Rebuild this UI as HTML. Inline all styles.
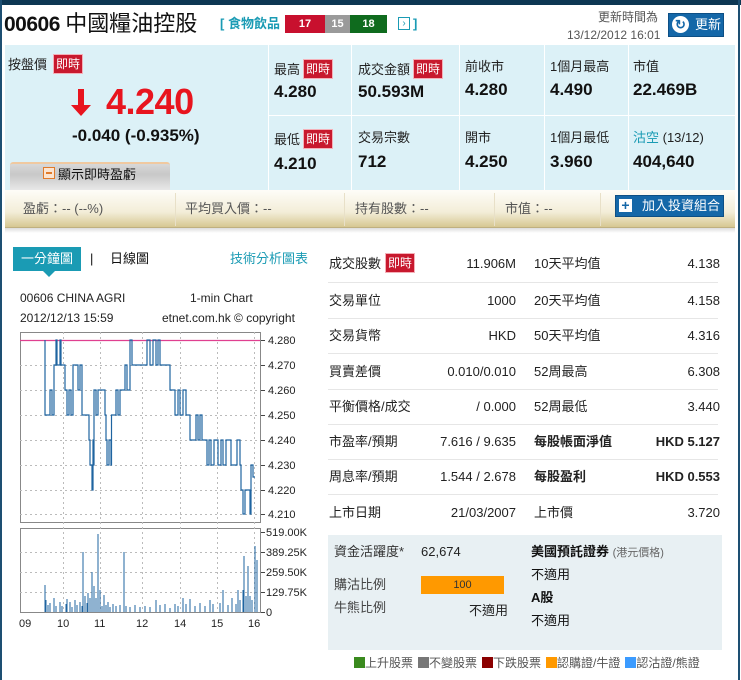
<!DOCTYPE html>
<html><head><meta charset="utf-8">
<style>
*{margin:0;padding:0;box-sizing:border-box}
body{width:741px;height:680px;overflow:hidden;background:#fff;font-family:"Liberation Sans","Noto Sans CJK TC",sans-serif;color:#111;position:relative}
.a{position:absolute;white-space:nowrap;line-height:16px}
.rt{position:absolute;background:#c8192e;color:#fff;font-size:12px;padding:0 2px;line-height:18px;border:1px solid #f4b0b8}
.lab{font-size:13px;color:#222}
.val{font-size:17px;font-weight:bold;color:#111;line-height:20px}
.tl{font-size:13px;color:#222}
.tv{font-size:13px;color:#222;text-align:right}
.sep{position:absolute;height:1px;background:#e6e6e6}
.lg{display:inline-block;width:11px;height:11px;vertical-align:-1px;margin-left:5px}
</style></head><body>
<div class="a" style="left:0;top:0;width:741px;height:5px;background:#0d3753"></div>
<div class="a" style="left:0;top:0;width:2px;height:680px;background:#1d4f72"></div>
<div class="a" style="left:738px;top:0;width:2px;height:680px;background:#1d4f72"></div>

<div class="a" style="left:4px;top:12px;font-size:21px;font-weight:bold;letter-spacing:-0.5px;line-height:24px">00606 <span style="font-weight:normal;font-size:22px;letter-spacing:0">中國糧油控股</span></div>
<div class="a" style="left:220px;top:16px;font-size:13px;color:#1a9bb4;font-weight:bold">[ 食物飲品</div>
<div class="a" style="left:285px;top:15px;width:40px;height:18px;background:#c8102e;color:#fff;font-size:11px;font-weight:bold;text-align:center;line-height:18px">17</div>
<div class="a" style="left:325px;top:15px;width:25px;height:18px;background:#9a9a9a;color:#fff;font-size:11px;font-weight:bold;text-align:center;line-height:18px">15</div>
<div class="a" style="left:350px;top:15px;width:37px;height:18px;background:#0f6b1e;color:#fff;font-size:11px;font-weight:bold;text-align:center;line-height:18px">18</div>
<div class="a" style="left:398px;top:17px;width:12px;height:13px;border:1px solid #1a9bb4;color:#1a9bb4;font-size:10px;line-height:11px;text-align:center">›</div>
<div class="a" style="left:413px;top:16px;font-size:13px;color:#1a9bb4;font-weight:bold">]</div>
<div class="a" style="left:598px;top:9px;font-size:12px;color:#555">更新時間為</div>
<div class="a" style="left:567px;top:27px;font-size:12px;color:#555">13/12/2012 16:01</div>
<div class="a" style="left:668px;top:13px;width:56px;height:24px;background:#1467a8;border:1px solid #0d4f85;color:#fff;font-size:13px;line-height:22px;padding-left:26px">更新</div>
<div class="a" style="left:672px;top:16px;width:17px;height:17px;border-radius:50%;background:#fff;color:#1467a8;font-size:13px;font-weight:bold;line-height:17px;text-align:center">↻</div>

<div class="a" style="left:5px;top:45px;width:730px;height:145px;background:#dcf1f7"></div>
<div class="a" style="left:268px;top:45px;width:1px;height:145px;background:#fff"></div>
<div class="a" style="left:351px;top:45px;width:1px;height:145px;background:#fff"></div>
<div class="a" style="left:459px;top:45px;width:1px;height:145px;background:#fff"></div>
<div class="a" style="left:544px;top:45px;width:1px;height:145px;background:#fff"></div>
<div class="a" style="left:628px;top:45px;width:1px;height:145px;background:#fff"></div>
<div class="a" style="left:268px;top:115px;width:467px;height:1px;background:#fff"></div>

<div class="a lab" style="left:8px;top:57px">按盤價</div>
<div class="rt" style="left:53px;top:54px">即時</div>
<svg class="a" style="left:68px;top:87px" width="26" height="30"><path d="M10 2h6v16h7L13 29 3 18h7z" fill="#e8141e"/></svg>
<div class="a" style="left:106px;top:82px;font-size:36px;font-weight:bold;color:#e8141e;letter-spacing:-0.5px;line-height:40px">4.240</div>
<div class="a" style="left:72px;top:126px;font-size:17px;font-weight:bold;line-height:20px">-0.040 (-0.935%)</div>
<div class="a" style="left:10px;top:162px;width:160px;height:28px;background:linear-gradient(#d8d8d8,#c8c8c8 40%,#e8e8e8);border-top:2px solid #f0c9a0;border-radius:3px 3px 0 0"></div>
<div class="a" style="left:43px;top:167px;width:12px;height:12px;border:1.5px solid #e07a2a;background:#fbe4d0"></div>
<div class="a" style="left:46px;top:172px;width:6px;height:1.5px;background:#e07a2a"></div>
<div class="a" style="left:58px;top:167px;font-size:13px">顯示即時盈虧</div>

<div class="a lab" style="left:274px;top:62px">最高</div><div class="rt" style="left:303px;top:59px">即時</div>
<div class="a val" style="left:274px;top:82px">4.280</div>
<div class="a lab" style="left:358px;top:62px">成交金額</div><div class="rt" style="left:413px;top:59px">即時</div>
<div class="a val" style="left:358px;top:82px">50.593M</div>
<div class="a lab" style="left:465px;top:59px">前收市</div>
<div class="a val" style="left:465px;top:80px">4.280</div>
<div class="a lab" style="left:550px;top:59px">1個月最高</div>
<div class="a val" style="left:550px;top:80px">4.490</div>
<div class="a lab" style="left:633px;top:59px">市值</div>
<div class="a val" style="left:633px;top:80px">22.469B</div>

<div class="a lab" style="left:274px;top:132px">最低</div><div class="rt" style="left:303px;top:129px">即時</div>
<div class="a val" style="left:274px;top:154px">4.210</div>
<div class="a lab" style="left:358px;top:130px">交易宗數</div>
<div class="a val" style="left:358px;top:152px">712</div>
<div class="a lab" style="left:465px;top:130px">開市</div>
<div class="a val" style="left:465px;top:152px">4.250</div>
<div class="a lab" style="left:550px;top:130px">1個月最低</div>
<div class="a val" style="left:550px;top:152px">3.960</div>
<div class="a lab" style="left:633px;top:130px"><span style="color:#1a9bb4">沽空</span> (13/12)</div>
<div class="a val" style="left:633px;top:152px">404,640</div>

<div class="a" style="left:5px;top:190px;width:730px;height:38px;background:linear-gradient(#fefdf8,#f3edd8 60%,#d6c792);border-bottom:1px solid #bfb080"></div>
<div class="a" style="left:5px;top:228px;width:730px;height:5px;background:linear-gradient(#ddd,#fff)"></div>
<div class="a" style="left:175px;top:193px;width:1px;height:33px;background:#e8e0c8"></div>
<div class="a" style="left:344px;top:193px;width:1px;height:33px;background:#e8e0c8"></div>
<div class="a" style="left:494px;top:193px;width:1px;height:33px;background:#e8e0c8"></div>
<div class="a" style="left:600px;top:193px;width:1px;height:33px;background:#e8e0c8"></div>
<div class="a" style="left:23px;top:201px;font-size:13px;color:#555">盈虧：-- (--%)</div>
<div class="a" style="left:185px;top:201px;font-size:13px;color:#555">平均買入價：--</div>
<div class="a" style="left:355px;top:201px;font-size:13px;color:#555">持有股數：--</div>
<div class="a" style="left:505px;top:201px;font-size:13px;color:#555">市值：--</div>
<div class="a" style="left:615px;top:195px;width:109px;height:22px;background:#1467a8;border:1px solid #0d4f85;color:#fff;font-size:13px;line-height:20px;padding-left:26px">加入投資組合</div>
<div class="a" style="left:619px;top:199px;width:13px;height:13px;background:#fff;color:#1467a8;font-size:14px;font-weight:bold;line-height:12px;text-align:center">+</div>

<div class="a" style="left:13px;top:247px;width:68px;height:24px;background:#1a9bb4;color:#fff;font-size:13px;line-height:24px;text-align:center">一分鐘圖</div>
<div class="a" style="left:43px;top:271px;width:0;height:0;border-left:6px solid transparent;border-right:6px solid transparent;border-top:6px solid #1a9bb4"></div>
<div class="a" style="left:90px;top:251px;font-size:13px">|</div>
<div class="a" style="left:110px;top:251px;font-size:13px">日線圖</div>
<div class="a" style="left:230px;top:251px;font-size:13px;color:#1a9bb4">技術分析圖表</div>

<div class="a" style="left:12px;top:285px;width:312px;height:350px;background:#f9f9f9"></div>
<svg class="a" style="left:0;top:0" width="330" height="640">
<rect x="12" y="285" width="312" height="350" fill="#fff"/>
<g font-family="Liberation Sans" font-size="12" fill="#222">
<text x="20" y="302">00606 CHINA AGRI</text><text x="190" y="302">1-min Chart</text>
<text x="20" y="322">2012/12/13 15:59</text><text x="162" y="322">etnet.com.hk © copyright</text>
</g>
<rect x="20.5" y="332.5" width="240" height="190" fill="#fff" stroke="#888"/>
<rect x="20.5" y="528.5" width="240" height="84" fill="#fff" stroke="#888"/>
<g stroke="#bbb" stroke-dasharray="2,3" stroke-width="1">
<path d="M20 365.5H260M20 390.5H260M20 415.5H260M20 440.5H260M20 465.5H260M20 490.5H260M20 514.5H260M20 552.5H260M20 572.5H260M20 592.5H260"/>
<path d="M63.5 332V612M100.5 332V612M142.5 332V612M180.5 332V612M217.5 332V612M254.5 332V612"/>
</g>
<path d="M20 340.5H260" stroke="#e04090" stroke-width="1.2"/>
<path fill="none" stroke="#1f64a0" stroke-width="1.2" d="M45 340V415H50V390H52V415H54V365H56V340H57V365H60V340H61V365H65V390H67V415H69V390H71V415H73V365H78V390H80V365H82V415H89V440H90V465H92V490H93V440H93.5V465H94V390H96V415H98V390H105V415H106V440H107V465H109V440H111V465H111.5V415H113V415H116V390H118V415H120V390H125V365H127V390H130V340H132V365H147V340H150V365H153V340H156V365H158V340H160V365H170V390H175V415H178V390H180V415H183V390H186V415H190V440H196V415H198V440H200V415H202V440H207V465H209V440H211V465H214V440H218V465H221V440H223V465H226V440H231V465H237V440H240V465H241V490H243V514H245V490H250V514H251V465H253V477H255"/>
<path stroke="#1f64a0" stroke-width="1" d="M45 612V585M46 612V600M48 612V605M50 612V603M54 612V598M56 612V606M60 612V602M62 612V606M66 612V604M67 612V599M70 612V602M72 612V607M75 612V600M77 612V605M80 612V602M82 612V606M83 612V552M85 612V596M87 612V603M88 612V593M90 612V598M92 612V572M94 612V586M96 612V598M98 612V534M100 612V590M102 612V606M104 612V595M106 612V605M108 612V602M110 612V607M113 612V604M116 612V606M120 612V605M124 612V552M126 612V606M130 612V607M135 612V605M140 612V607M145 612V606M150 612V607M156 612V600M160 612V605M165 612V604M170 612V608M175 612V604M178 612V606M183 612V598M186 612V604M190 612V599M195 612V606M200 612V603M205 612V606M210 612V600M213 612V604M220 612V603M223 612V590M228 612V605M232 612V598M236 612V604M238 612V590M240 612V600M243 612V590M244 612V556M246 612V596M248 612V566M250 612V596M252 612V600M255 612V546M257 612V560"/>
<path stroke="#444" d="M261 340.5h4M261 365.5h4M261 390.5h4M261 415.5h4M261 440.5h4M261 465.5h4M261 490.5h4M261 514.5h4M261 532.5h4M261 552.5h4M261 572.5h4M261 592.5h4M261 612.5h4"/>
<g font-family="Liberation Sans" font-size="11" fill="#222">
<text x="268" y="344">4.280</text><text x="268" y="369">4.270</text><text x="268" y="394">4.260</text><text x="268" y="419">4.250</text><text x="268" y="444">4.240</text><text x="268" y="469">4.230</text><text x="268" y="494">4.220</text><text x="268" y="518">4.210</text>
<text x="266" y="536">519.00K</text><text x="266" y="556">389.25K</text><text x="266" y="576">259.50K</text><text x="266" y="596">129.75K</text><text x="266" y="616">0</text>
<text x="19" y="627">09</text><text x="57" y="627">10</text><text x="94" y="627">11</text><text x="136" y="627">12</text><text x="174" y="627">14</text><text x="211" y="627">15</text><text x="248" y="627">16</text>
</g>
</svg>

<div class="a tl" style="left:329px;top:256px">成交股數</div><div class="rt" style="left:385px;top:253px">即時</div>
<div class="a tv" style="left:420px;top:256px;width:96px">11.906M</div>
<div class="a tl" style="left:534px;top:256px">10天平均值</div><div class="a tv" style="left:620px;top:256px;width:100px">4.138</div>
<div class="sep" style="left:328px;top:282px;width:390px"></div>
<div class="a tl" style="left:329px;top:293px">交易單位</div><div class="a tv" style="left:420px;top:293px;width:96px">1000</div>
<div class="a tl" style="left:534px;top:293px">20天平均值</div><div class="a tv" style="left:620px;top:293px;width:100px">4.158</div>
<div class="sep" style="left:328px;top:318px;width:390px"></div>
<div class="a tl" style="left:329px;top:328px">交易貨幣</div><div class="a tv" style="left:420px;top:328px;width:96px">HKD</div>
<div class="a tl" style="left:534px;top:328px">50天平均值</div><div class="a tv" style="left:620px;top:328px;width:100px">4.316</div>
<div class="sep" style="left:328px;top:353px;width:390px"></div>
<div class="a tl" style="left:329px;top:364px">買賣差價</div><div class="a tv" style="left:420px;top:364px;width:96px">0.010/0.010</div>
<div class="a tl" style="left:534px;top:364px">52周最高</div><div class="a tv" style="left:620px;top:364px;width:100px">6.308</div>
<div class="sep" style="left:328px;top:389px;width:390px"></div>
<div class="a tl" style="left:329px;top:399px">平衡價格/成交</div><div class="a tv" style="left:420px;top:399px;width:96px">/ 0.000</div>
<div class="a tl" style="left:534px;top:399px">52周最低</div><div class="a tv" style="left:620px;top:399px;width:100px">3.440</div>
<div class="sep" style="left:328px;top:424px;width:390px"></div>
<div class="a tl" style="left:329px;top:434px">市盈率/預期</div><div class="a tv" style="left:420px;top:434px;width:96px">7.616 / 9.635</div>
<div class="a tl" style="left:534px;top:434px;font-weight:bold">每股帳面淨值</div><div class="a tv" style="left:620px;top:434px;width:100px;font-weight:bold">HKD 5.127</div>
<div class="sep" style="left:328px;top:459px;width:390px"></div>
<div class="a tl" style="left:329px;top:469px">周息率/預期</div><div class="a tv" style="left:420px;top:469px;width:96px">1.544 / 2.678</div>
<div class="a tl" style="left:534px;top:469px;font-weight:bold">每股盈利</div><div class="a tv" style="left:620px;top:469px;width:100px;font-weight:bold">HKD 0.553</div>
<div class="sep" style="left:328px;top:494px;width:390px"></div>
<div class="a tl" style="left:329px;top:505px">上市日期</div><div class="a tv" style="left:420px;top:505px;width:96px">21/03/2007</div>
<div class="a tl" style="left:534px;top:505px">上市價</div><div class="a tv" style="left:620px;top:505px;width:100px">3.720</div>

<div class="a" style="left:328px;top:535px;width:394px;height:115px;background:#e8f0f3"></div>
<div class="a" style="left:334px;top:544px;font-size:13px;color:#333">資金活躍度*</div>
<div class="a" style="left:421px;top:544px;font-size:13px;color:#222">62,674</div>
<div class="a" style="left:334px;top:577px;font-size:13px;color:#444">購沽比例</div>
<div class="a" style="left:421px;top:576px;width:83px;height:18px;background:#f90;color:#333;font-size:11px;text-align:center;line-height:18px">100</div>
<div class="a" style="left:334px;top:600px;font-size:13px;color:#444">牛熊比例</div>
<div class="a" style="left:469px;top:603px;font-size:13px;color:#222">不適用</div>
<div class="a" style="left:531px;top:544px;font-size:13px;font-weight:bold">美國預託證券 <span style="font-weight:normal;font-size:11px;color:#666">(港元價格)</span></div>
<div class="a" style="left:531px;top:567px;font-size:13px">不適用</div>
<div class="a" style="left:531px;top:590px;font-size:13px;font-weight:bold">A股</div>
<div class="a" style="left:531px;top:613px;font-size:13px">不適用</div>

<div class="a" style="left:354px;top:655px;font-size:12px;color:#555">
<span class="lg" style="background:#3a8a1e;margin-left:0"></span>上升股票<span class="lg" style="background:#777"></span>不變股票<span class="lg" style="background:#8b0000"></span>下跌股票<span class="lg" style="background:#f90"></span>認購證/牛證<span class="lg" style="background:#3b9bff"></span>認沽證/熊證
</div>
</body></html>
